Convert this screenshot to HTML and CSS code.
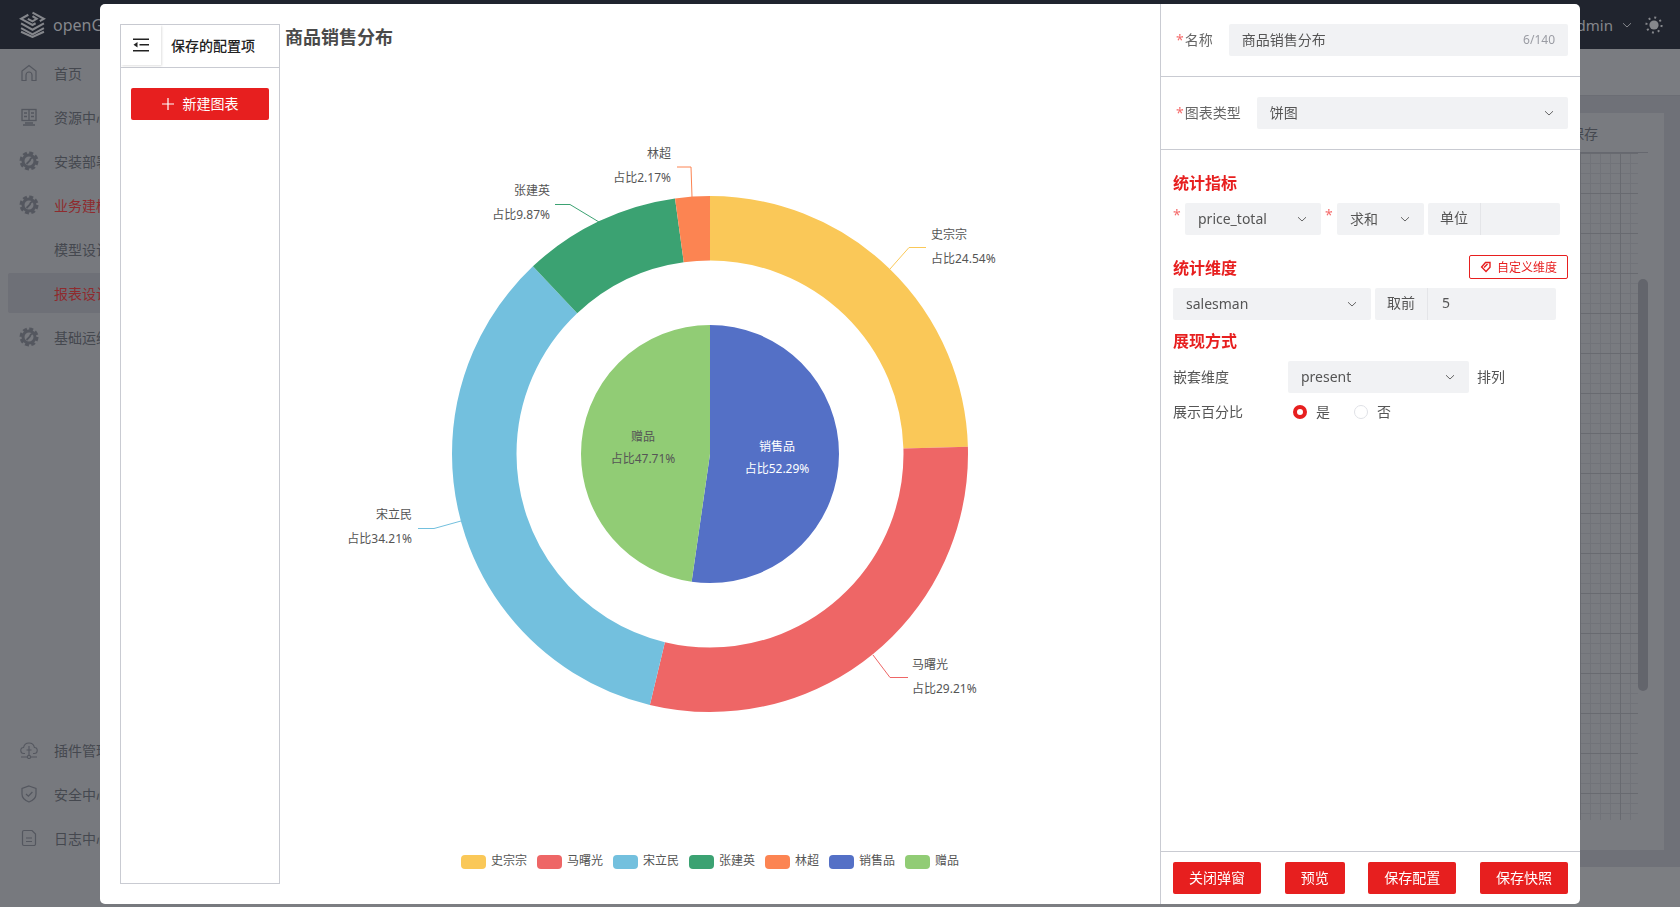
FILE: index.html
```html
<!DOCTYPE html>
<html lang="en">
<head>
  <meta charset="UTF-8" />
  <title>openGauss - 报表设计</title>
  <link rel="stylesheet" href="styles.css">
</head>
<body>
  <svg class="defs" width="0" height="0">
    <symbol id="gear" viewBox="0 0 20 20">
      <circle cx="10" cy="10" r="8.2" fill="none" stroke="currentColor" stroke-width="2.6" stroke-dasharray="4 2.44"/>
      <circle cx="10" cy="10" r="6" fill="none" stroke="currentColor" stroke-width="3"/>
      <path d="M7.5 13 L11 9.5 A2.4 2.4 0 0 1 13.6 7" fill="none" stroke="currentColor" stroke-width="1.8"/>
    </symbol>
    <symbol id="chev" viewBox="0 0 12 12">
      <path d="M2 4.2 L6 8 L10 4.2" fill="none" stroke="currentColor" stroke-width="1"/>
    </symbol>
  </svg>

  <header class="topbar">
    <div class="brand">
      <svg class="logo" width="27" height="27" viewBox="0 0 26 26" fill="none" stroke="currentColor" stroke-width="2">
        <path d="M13 1.5 L24 7.5 L20 9.8 M16 11.8 L13 13.5 L2 7.5 L9 3.6"/>
        <path d="M8.5 7.5 L13 10 L17 7.5 L13 5"/>
        <path d="M2 12 L13 18 L24 12"/>
        <path d="M2 16.5 L13 22.5 L24 16.5"/>
        <path d="M2 20 L13 25 L24 20"/>
      </svg>
      <span>openGauss</span>
    </div>
    <div class="user">
      <span>admin</span>
      <svg width="12" height="12"><use href="#chev"/></svg>
      <svg class="sun" width="18" height="18" viewBox="0 0 18 18">
        <circle cx="9" cy="9" r="4.6" fill="currentColor"/>
        <circle cx="9" cy="9" r="7.6" fill="none" stroke="currentColor" stroke-width="2" stroke-dasharray="2 3.97"/>
      </svg>
    </div>
  </header>

  <div class="shell">
    <aside class="sidebar">
      <div class="menu-group">
        <div class="menu-item">
          <svg width="18" height="18" viewBox="0 0 18 18" fill="none" stroke="currentColor" stroke-width="1.2"><path d="M2 16.5 V7 L9 1.5 L16 7 V16.5 H12 V11 A3 3 0 0 0 6 11 V16.5 Z"/></svg>
          <span>首页</span>
        </div>
        <div class="menu-item">
          <svg width="18" height="18" viewBox="0 0 18 18" fill="none" stroke="currentColor" stroke-width="1.3"><rect x="2" y="1.5" width="14" height="11"/><path d="M9 1.5 V12.5 M4 5 H7 M4 8.5 H7 M11 5 H14 M11 8.5 H14 M5 15 H13 M3 17 H15"/></svg>
          <span>资源中心</span>
        </div>
        <div class="menu-item">
          <svg class="gear" width="20" height="20"><use href="#gear"/></svg>
          <span>安装部署</span>
        </div>
        <div class="menu-item is-open">
          <svg class="gear" width="20" height="20"><use href="#gear"/></svg>
          <span>业务建模</span>
        </div>
        <div class="menu-item is-sub"><span>模型设计</span></div>
        <div class="menu-item is-sub is-active"><span>报表设计</span></div>
        <div class="menu-item">
          <svg class="gear" width="20" height="20"><use href="#gear"/></svg>
          <span>基础运维</span>
        </div>
      </div>
      <div class="menu-group">
        <div class="menu-item">
          <svg width="18" height="18" viewBox="0 0 18 18" fill="none" stroke="currentColor" stroke-width="1.1"><path d="M5 12.5 H4 A3 3 0 0 1 3.6 6.5 A5.5 5.5 0 0 1 14.4 6.5 A3 3 0 0 1 14 12.5 H13 M9 5 V14 M6.5 9 H11.5 M1 16 H7 M11 16 H17"/><circle cx="9" cy="16" r="1.6"/></svg>
          <span>插件管理</span>
        </div>
        <div class="menu-item">
          <svg width="18" height="18" viewBox="0 0 18 18" fill="none" stroke="currentColor" stroke-width="1.2"><path d="M9 1 L16 3.5 V9 C16 13 13 15.6 9 17 C5 15.6 2 13 2 9 V3.5 Z"/><path d="M6 9 L8.4 11.2 L12.4 7"/></svg>
          <span>安全中心</span>
        </div>
        <div class="menu-item">
          <svg width="18" height="18" viewBox="0 0 18 18" fill="none" stroke="currentColor" stroke-width="1.2"><path d="M4 1.5 H12 L15.5 5 V15 A1.5 1.5 0 0 1 14 16.5 H4 A1.5 1.5 0 0 1 2.5 15 V3 A1.5 1.5 0 0 1 4 1.5 Z M6 9 H12 M6 12.5 H12"/></svg>
          <span>日志中心</span>
        </div>
      </div>
    </aside>

    <main class="page">
      <div class="page-head"></div>
      <div class="page-body">
        <section class="card">
          <div class="card-head"><span>未保存</span></div>
          <div class="canvas">
            <div class="canvas-grid"></div>
            <div class="canvas-thumb"></div>
          </div>
        </section>
      </div>
      <div class="page-foot"></div>
    </main>
  </div>

  <div class="modal-mask">
    <div class="modal">
      <div class="modal-left">
        <div class="saved-panel">
          <div class="saved-head">
            <div class="saved-toggle">
              <svg width="16" height="14" viewBox="0 0 16 14" fill="currentColor">
                <rect x="0" y="0.5" width="16" height="1.5"/>
                <rect x="6.5" y="6" width="9.5" height="1.5"/>
                <rect x="0" y="12" width="16" height="1.5"/>
                <path d="M0.5 6.8 L4.5 4 V9.6 Z"/>
              </svg>
            </div>
            <span class="saved-title">保存的配置项</span>
          </div>
          <button class="btn btn-new">
            <svg width="12" height="12" viewBox="0 0 12 12" fill="none" stroke="currentColor" stroke-width="1.2"><path d="M6 0 V12 M0 6 H12"/></svg>
            <span>新建图表</span>
          </button>
        </div>

        <div class="chart-col">
          <h2 class="chart-title">商品销售分布</h2>
          <svg class="chart" width="880" height="834" viewBox="280 50 880 834">
            <g transform="rotate(-90 710 454)" fill="none">
              <circle class="s-yellow" cx="710" cy="454" r="225.75" stroke-width="64.5" pathLength="100" stroke-dasharray="24.54 75.46" stroke-dashoffset="0"/>
              <circle class="s-red" cx="710" cy="454" r="225.75" stroke-width="64.5" pathLength="100" stroke-dasharray="29.21 70.79" stroke-dashoffset="-24.54"/>
              <circle class="s-sky" cx="710" cy="454" r="225.75" stroke-width="64.5" pathLength="100" stroke-dasharray="34.21 65.79" stroke-dashoffset="-53.75"/>
              <circle class="s-green" cx="710" cy="454" r="225.75" stroke-width="64.5" pathLength="100" stroke-dasharray="9.87 90.13" stroke-dashoffset="-87.96"/>
              <circle class="s-orange" cx="710" cy="454" r="225.75" stroke-width="64.5" pathLength="100" stroke-dasharray="2.17 97.83" stroke-dashoffset="-97.83"/>
              <circle class="s-blue" cx="710" cy="454" r="64.5" stroke-width="129" pathLength="100" stroke-dasharray="52.29 47.71" stroke-dashoffset="0"/>
              <circle class="s-lime" cx="710" cy="454" r="64.5" stroke-width="129" pathLength="100" stroke-dasharray="47.71 52.29" stroke-dashoffset="-52.29"/>
            </g>

            <g fill="none">
              <polyline class="s-yellow" points="890,269 909,247.5 926,247.5"/>
              <polyline class="s-orange" points="692,197 691,167 677,167"/>
              <polyline class="s-green" points="599,222 570,204.5 555,204.5"/>
              <polyline class="s-red" points="873,655 890,677.5 908,677.5"/>
              <polyline class="s-sky" points="461,521 434,528.5 418,528.5"/>
            </g>

            <g class="lbl">
              <text x="931" y="239">史宗宗</text>
              <text x="931" y="263">占比24.54%</text>
              <text x="671" y="158" text-anchor="end">林超</text>
              <text x="671" y="182" text-anchor="end">占比2.17%</text>
              <text x="550" y="195" text-anchor="end">张建英</text>
              <text x="550" y="219" text-anchor="end">占比9.87%</text>
              <text x="912" y="669">马曙光</text>
              <text x="912" y="693">占比29.21%</text>
              <text x="412" y="519" text-anchor="end">宋立民</text>
              <text x="412" y="543" text-anchor="end">占比34.21%</text>
              <text class="lbl-in" x="777" y="451" text-anchor="middle">销售品</text>
              <text class="lbl-in" x="777" y="473" text-anchor="middle">占比52.29%</text>
              <text x="643" y="441" text-anchor="middle">赠品</text>
              <text x="643" y="463" text-anchor="middle">占比47.71%</text>
            </g>

            <g class="lbl">
              <rect class="f-yellow" x="461" y="855" width="25" height="14" rx="4"/><text x="491" y="865">史宗宗</text>
              <rect class="f-red" x="537" y="855" width="25" height="14" rx="4"/><text x="567" y="865">马曙光</text>
              <rect class="f-sky" x="613" y="855" width="25" height="14" rx="4"/><text x="643" y="865">宋立民</text>
              <rect class="f-green" x="689" y="855" width="25" height="14" rx="4"/><text x="719" y="865">张建英</text>
              <rect class="f-orange" x="765" y="855" width="25" height="14" rx="4"/><text x="795" y="865">林超</text>
              <rect class="f-blue" x="829" y="855" width="25" height="14" rx="4"/><text x="859" y="865">销售品</text>
              <rect class="f-lime" x="905" y="855" width="25" height="14" rx="4"/><text x="935" y="865">赠品</text>
            </g>
          </svg>
        </div>
      </div>

      <div class="modal-right">
        <div class="form-top">
          <label class="field-label"><i>*</i>名称</label>
          <div class="control grow">
            <span>商品销售分布</span>
            <span class="count">6/140</span>
          </div>
        </div>
        <div class="form-top">
          <label class="field-label"><i>*</i>图表类型</label>
          <div class="control grow">
            <span>饼图</span>
            <svg width="12" height="12"><use href="#chev"/></svg>
          </div>
        </div>

        <div class="form-body">
          <h3 class="sec-title first">统计指标</h3>
          <div class="row">
            <i class="star">*</i>
            <div class="control w-metric"><span>price_total</span><svg width="12" height="12"><use href="#chev"/></svg></div>
            <i class="star star-2">*</i>
            <div class="control w-agg"><span>求和</span><svg width="12" height="12"><use href="#chev"/></svg></div>
            <div class="group w-unit">
              <span class="addon">单位</span>
              <span class="group-input"></span>
            </div>
          </div>

          <div class="sec-head">
            <h3 class="sec-title">统计维度</h3>
            <button class="btn-custom">
              <svg width="12" height="12" viewBox="0 0 12 12" fill="none" stroke="currentColor" stroke-width="1.4"><path d="M5.5 1.5 H10 V6.2 L6 10.5 L1.6 6 Z"/><path d="M4 6.5 L7.5 3"/></svg>
              <span>自定义维度</span>
            </button>
          </div>
          <div class="row row-dim">
            <div class="control w-dim"><span>salesman</span><svg width="12" height="12"><use href="#chev"/></svg></div>
            <div class="group w-top">
              <span class="addon">取前</span>
              <span class="group-input">5</span>
            </div>
          </div>

          <h3 class="sec-title third">展现方式</h3>
          <div class="row">
            <span class="plain-label w-label">嵌套维度</span>
            <div class="control w-nest"><span>present</span><svg width="12" height="12"><use href="#chev"/></svg></div>
            <span class="plain-label after">排列</span>
          </div>
          <div class="row row-radio">
            <span class="plain-label w-label">展示百分比</span>
            <span class="radio is-on"></span><span class="radio-text">是</span>
            <span class="radio"></span><span class="radio-text">否</span>
          </div>
        </div>

        <div class="form-foot">
          <button class="btn">关闭弹窗</button>
          <button class="btn">预览</button>
          <button class="btn">保存配置</button>
          <button class="btn">保存快照</button>
        </div>
      </div>
    </div>
  </div>
</body>
</html>
```

FILE: styles.css
```css
:root {
  --red: #e71f1f;
  --line: #c9cbd2;
  --fill: #f1f2f4;
  --dim-text: #45484f;
}

* {
  box-sizing: border-box;
}

html, body {
  height: 100%;
}

body {
  margin: 0;
  overflow: hidden;
  display: flex;
  flex-direction: column;
  background: #77797e;
  color: #555;
  font-family: "Noto Sans", "Noto Sans CJK SC", sans-serif;
  font-size: 14px;
}

.defs {
  position: absolute;
}

/* page behind the dialog, already dimmed */
.topbar {
  height: 49px;
  flex: none;
  background: #20242e;
  color: #85878c;
  display: flex;
  align-items: center;
  justify-content: space-between;
  padding: 0 17px 0 19px;
}

.brand {
  display: flex;
  align-items: center;
  gap: 7px;
  font-size: 16px;
}

.user {
  display: flex;
  align-items: center;
  gap: 8px;
  font-size: 15px;
}

.sun {
  margin-left: 4px;
}

.shell {
  flex: 1;
  display: flex;
  min-height: 0;
}

.sidebar {
  width: 220px;
  flex: none;
  padding: 4px 8px 49px;
  display: flex;
  flex-direction: column;
  justify-content: space-between;
  background: #77797e;
}

.menu-group {
  display: flex;
  flex-direction: column;
  gap: 4px;
}

.menu-item {
  height: 40px;
  display: flex;
  align-items: center;
  gap: 16px;
  padding-left: 12px;
  color: var(--dim-text);
}

.menu-item svg {
  flex: none;
  color: #54575f;
}

.menu-item svg.gear {
  margin: 0 -1px;
}

.menu-item.is-sub {
  padding-left: 46px;
}

.menu-item.is-open span,
.menu-item.is-active span {
  color: #8e2b2e;
}

.menu-item.is-active {
  background: #6e7077;
  border-radius: 2px;
}

.page {
  flex: 1;
  display: flex;
  flex-direction: column;
  min-width: 0;
  background: #6f7178;
}

.page-head {
  height: 47px;
  flex: none;
  background: #7a7c81;
  border-bottom: 1px solid #6b6d74;
}

.page-body {
  flex: 1;
  min-height: 0;
  padding: 17px 16px 17px 20px;
  display: flex;
}

.page-foot {
  height: 40px;
  flex: none;
  background: #7c7e82;
}

.card {
  flex: 1;
  display: flex;
  flex-direction: column;
  background: #797b80;
  padding: 0 16px 30px 20px;
  min-width: 0;
}

.card-head {
  height: 40px;
  flex: none;
  display: flex;
  align-items: center;
  justify-content: flex-end;
  padding-right: 50px;
  border-bottom: 1px solid #66686f;
  color: var(--dim-text);
}

.canvas {
  flex: 1;
  position: relative;
  min-height: 0;
}

.canvas-grid {
  height: 100%;
  margin-right: 10px;
  background-image:
    linear-gradient(#686a70 1px, transparent 1px),
    linear-gradient(90deg, #686a70 1px, transparent 1px),
    linear-gradient(#717379 1px, transparent 1px),
    linear-gradient(90deg, #717379 1px, transparent 1px);
  background-size: 40px 40px, 40px 40px, 10px 10px, 10px 10px;
}

.canvas-thumb {
  position: absolute;
  right: 0;
  top: 126px;
  width: 10px;
  height: 412px;
  border-radius: 5px;
  background: #63656c;
}

/* dialog */
.modal-mask {
  position: fixed;
  inset: 0;
  padding: 4px 100px 3px 100px;
  display: flex;
}

.modal {
  flex: 1;
  display: flex;
  background: white;
  border-radius: 5px;
  overflow: hidden;
}

.modal-left {
  width: 1060px;
  flex: none;
  display: flex;
  padding: 20px 0 20px 20px;
}

.saved-panel {
  width: 160px;
  flex: none;
  border: 1px solid var(--line);
}

.saved-head {
  height: 43px;
  display: flex;
  border-bottom: 1px solid var(--line);
}

.saved-toggle {
  width: 40px;
  height: 40px;
  display: flex;
  align-items: center;
  justify-content: center;
  color: #222;
  box-shadow: 1px 1px 2px rgba(0, 0, 0, 0.12);
}

.saved-title {
  padding-left: 10px;
  line-height: 42px;
  color: #222;
  font-weight: 500;
}

.btn {
  height: 32px;
  padding: 0 16px 2px;
  border: 0;
  border-radius: 2px;
  background: var(--red);
  color: white;
  font: inherit;
}

.btn-new {
  width: 138px;
  margin: 20px 10px;
  display: flex;
  align-items: center;
  justify-content: center;
  gap: 9px;
}

.btn-new svg {
  margin-top: 2px;
}

.chart-col {
  flex: 1;
  min-width: 0;
}

.chart-title {
  margin: 0;
  padding-left: 5px;
  font-size: 18px;
  line-height: 26px;
  font-weight: 700;
  color: #4a4a4a;
}

.chart {
  display: block;
}

.s-yellow { stroke: #fac858; }
.s-red { stroke: #ee6666; }
.s-sky { stroke: #73c0de; }
.s-green { stroke: #3ba272; }
.s-orange { stroke: #fc8452; }
.s-blue { stroke: #5470c6; }
.s-lime { stroke: #91cc75; }

.f-yellow { fill: #fac858; }
.f-red { fill: #ee6666; }
.f-sky { fill: #73c0de; }
.f-green { fill: #3ba272; }
.f-orange { fill: #fc8452; }
.f-blue { fill: #5470c6; }
.f-lime { fill: #91cc75; }

.lbl text {
  font-size: 12px;
  fill: #555;
}

.lbl .lbl-in {
  fill: white;
}

.modal-right {
  flex: 1;
  min-width: 0;
  display: flex;
  flex-direction: column;
  border-left: 1px solid var(--line);
}

.form-top {
  display: flex;
  align-items: center;
  padding: 20px 12px;
  border-bottom: 1px solid var(--line);
  height: 73px;
}

.field-label {
  color: #666;
  padding: 0 16px 2px 0;
  white-space: nowrap;
}

.field-label i {
  color: #f56c6c;
  font-style: normal;
  margin: 0 1px 0 3px;
}

.control {
  height: 32px;
  display: flex;
  align-items: center;
  justify-content: space-between;
  padding: 0 13px;
  background: var(--fill);
  border-radius: 2px;
  color: #555;
}

.control span {
  margin-top: -2px;
}

.control svg {
  flex: none;
  color: #666;
}

.grow {
  flex: 1;
  min-width: 0;
}

.count {
  color: #9a9ca3;
  font-size: 12px;
}

.form-body {
  flex: 1;
  min-height: 0;
  padding: 20px 12px 0;
}

.sec-title {
  margin: 0;
  font-size: 16px;
  line-height: 26px;
  font-weight: 700;
  color: var(--red);
}

.sec-title.first {
  margin-bottom: 7px;
}

.sec-title.third {
  margin: 8px 0 7px;
}

.sec-head {
  margin: 20px 0 7px;
  height: 26px;
  display: flex;
  align-items: flex-start;
  justify-content: space-between;
}

.btn-custom {
  width: 99px;
  height: 24px;
  padding: 0;
  display: flex;
  align-items: center;
  justify-content: center;
  gap: 5px;
  background: white;
  border: 1px solid var(--red);
  border-radius: 2px;
  color: var(--red);
  font: inherit;
  font-size: 12px;
}

.row {
  height: 32px;
  display: flex;
  align-items: center;
}

.star {
  width: 12px;
  flex: none;
  align-self: flex-start;
  color: #f56c6c;
  font-style: normal;
  line-height: 24px;
}

.star-2 {
  width: 12px;
  margin-left: 4px;
}

.w-metric { width: 136px; }
.w-agg { width: 87px; }
.w-unit { width: 132px; margin-left: 4px; }
.w-dim { width: 198px; }
.w-top { width: 181px; margin-left: 4px; }
.w-nest { width: 181px; }
.w-label { width: 115px; }

.group {
  height: 32px;
  display: flex;
  background: var(--fill);
  border-radius: 2px;
}

.addon {
  width: 53px;
  flex: none;
  line-height: 30px;
  text-align: center;
  border-right: 1px solid #e4e5e8;
}

.group-input {
  flex: 1;
  padding-left: 14px;
  line-height: 30px;
}

.plain-label {
  color: #555;
  flex: none;
  padding-bottom: 2px;
}

.plain-label.after {
  margin-left: 8px;
}

.row-radio {
  margin-top: 3px;
}

.radio {
  width: 14px;
  height: 14px;
  flex: none;
  border: 1px solid #dfe1e6;
  border-radius: 50%;
  margin-left: 5px;
}

.radio.is-on {
  border: 4px solid var(--red);
  background: white;
}

.radio-text {
  width: 42px;
  padding: 0 0 2px 9px;
  flex: none;
}

.form-foot {
  height: 53px;
  flex: none;
  display: flex;
  align-items: center;
  justify-content: space-between;
  padding: 0 12px;
  border-top: 1px solid var(--line);
}
```
